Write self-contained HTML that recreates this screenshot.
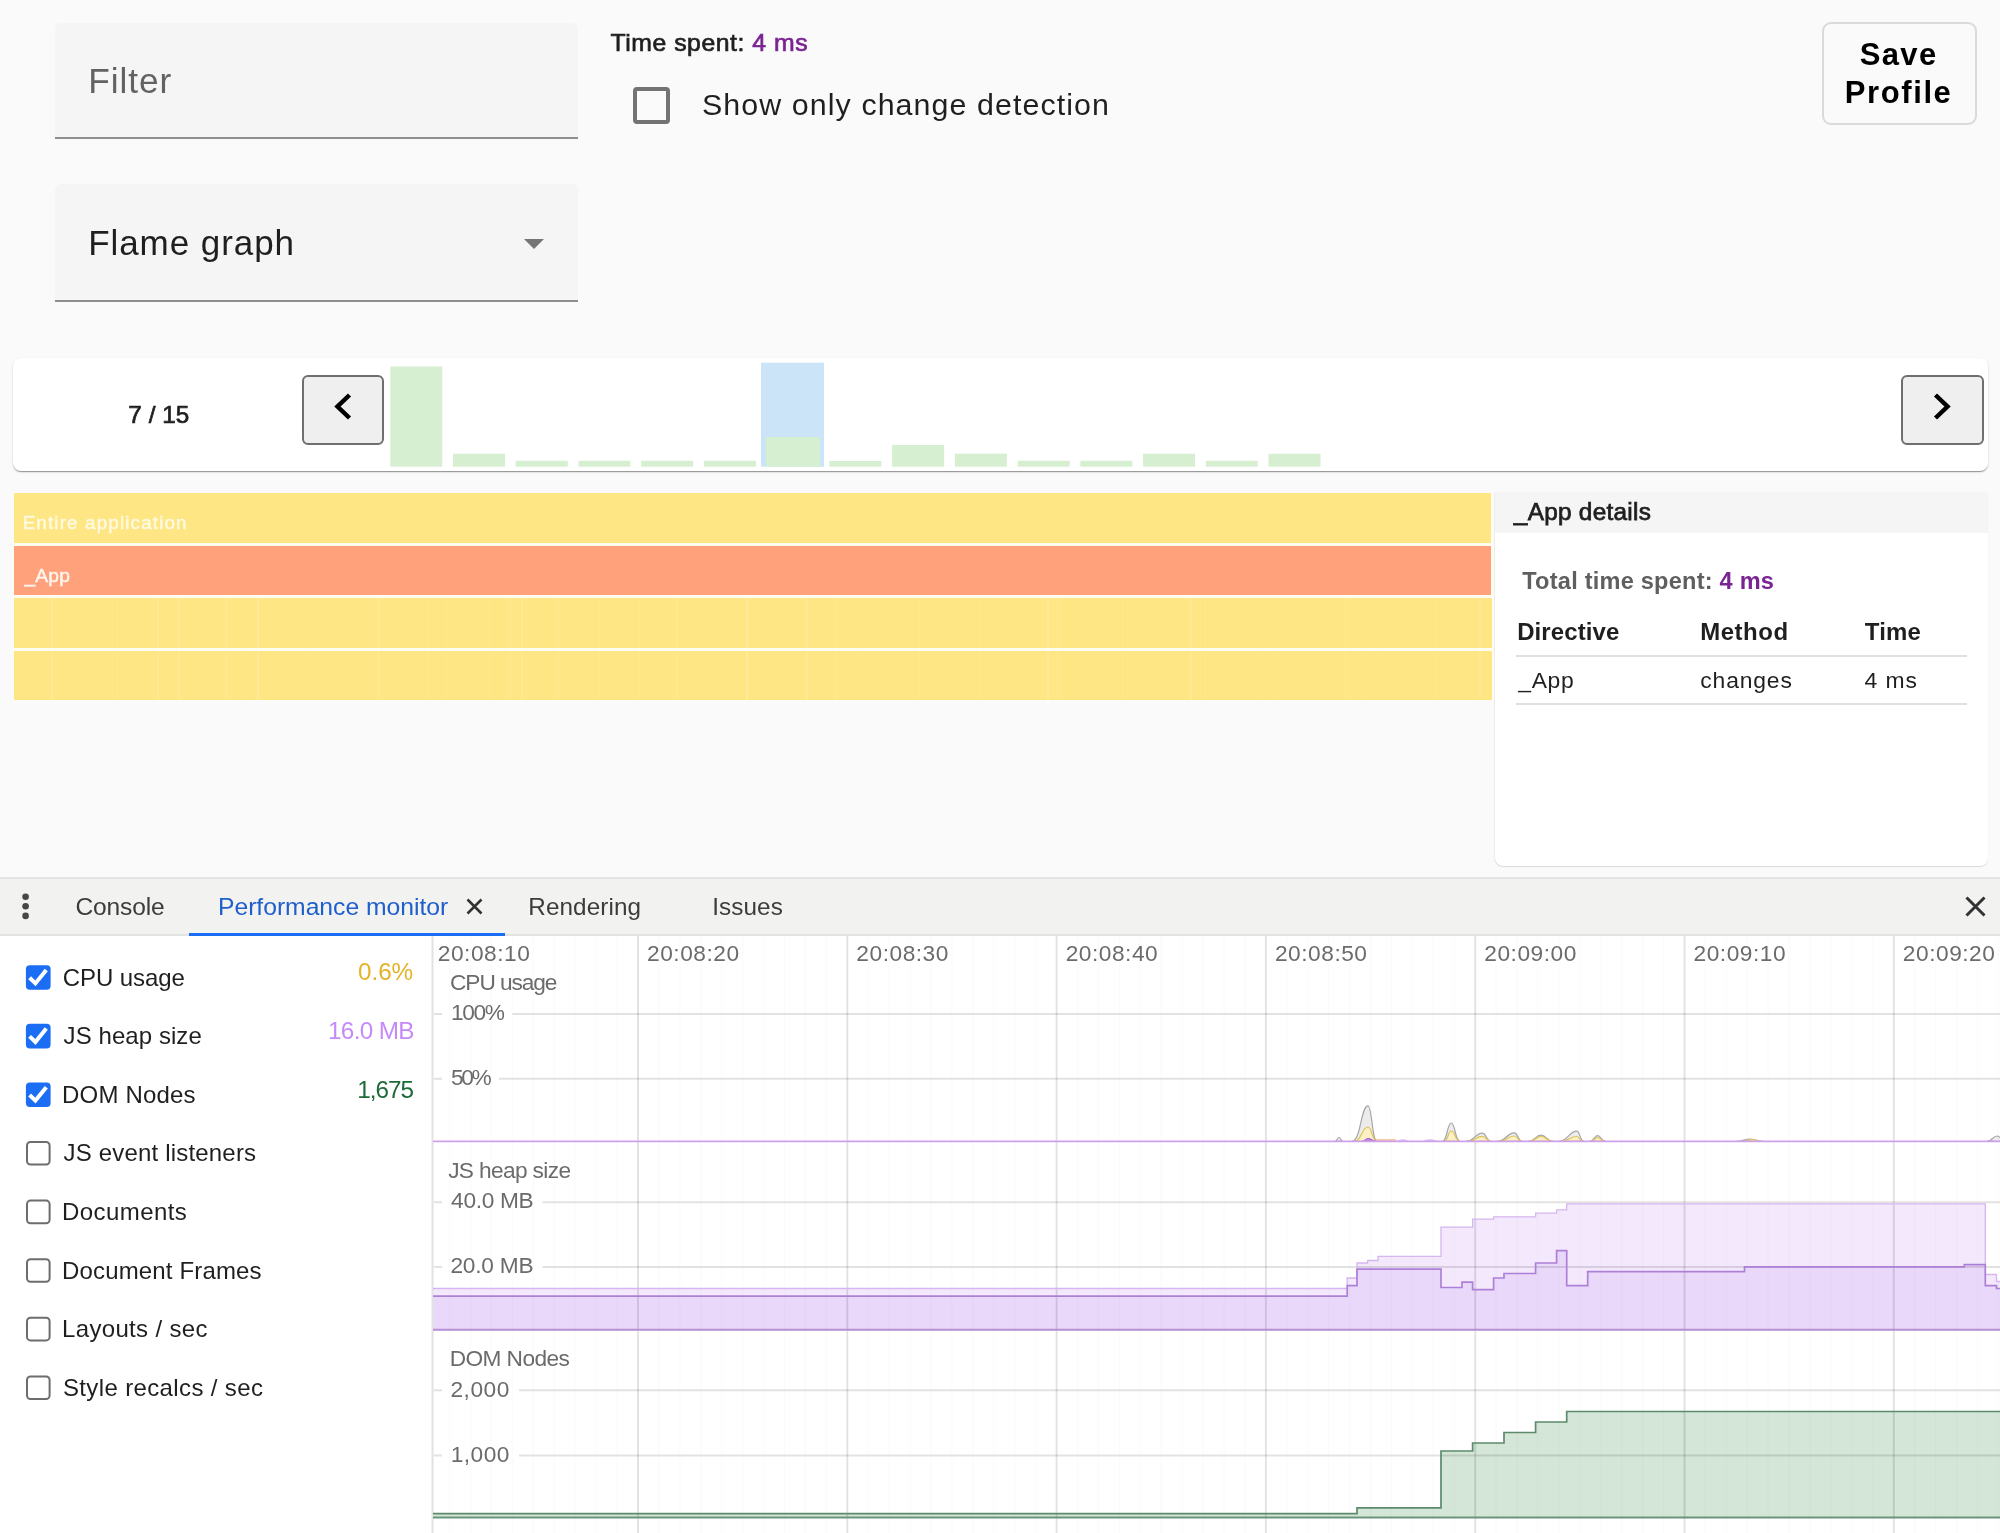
<!DOCTYPE html>
<html><head><meta charset="utf-8"><title>Profiler</title>
<style>
html,body{margin:0;padding:0;}
body{width:2000px;height:1533px;position:relative;overflow:hidden;background:#fafafa;font-family:"Liberation Sans", sans-serif;}
svg text{font-family:"Liberation Sans", sans-serif;}
</style></head><body>
<div style="position:absolute;left:55px;top:23px;width:523px;height:115px;background:#f5f5f5;border-radius:6px 6px 0 0;"></div><div style="position:absolute;left:55px;top:136.5px;width:523px;height:2px;background:#8e8e8e;"></div><div style="position:absolute;left:55px;top:184px;width:523px;height:116px;background:#f5f5f5;border-radius:6px 6px 0 0;"></div><div style="position:absolute;left:55px;top:299.5px;width:523px;height:2px;background:#8e8e8e;"></div><div style="position:absolute;left:632.5px;top:86.5px;width:29.5px;height:29.5px;border:4px solid #737373;border-radius:4px;"></div><div style="position:absolute;left:1822px;top:22px;width:151px;height:99px;border:2px solid #dadada;border-radius:9px;"></div><div style="position:absolute;left:12.5px;top:358px;width:1975.5px;height:113px;background:#fff;border-radius:8px;box-shadow:0 2px 1px -1px rgba(0,0,0,.24),0 1px 1px 0 rgba(0,0,0,.15),0 1px 3px 0 rgba(0,0,0,.12);"></div><div style="position:absolute;left:301.5px;top:375px;width:78.5px;height:65.5px;background:#efefef;border:2px solid #6f6f6f;border-radius:6px;"></div><div style="position:absolute;left:1900.5px;top:375px;width:79px;height:65.5px;background:#efefef;border:2px solid #6f6f6f;border-radius:6px;"></div><div style="position:absolute;left:13px;top:492.5px;width:1481px;height:208px;background:#fffdf2;"></div><div style="position:absolute;left:14px;top:493.4px;width:1477px;height:49.5px;background:#fee684;"></div><div style="position:absolute;left:14px;top:546px;width:1477px;height:49px;background:#ffa17b;"></div><div style="position:absolute;left:13.5px;top:598px;width:1478.5px;height:50px;background:#fee684;"></div><div style="position:absolute;left:13.5px;top:650.5px;width:1478.5px;height:49.5px;background:#fee684;"></div><div style="position:absolute;left:51.1px;top:598px;width:1.5px;height:49.5px;background:rgba(255,255,255,0.12);"></div><div style="position:absolute;left:116.6px;top:598px;width:1.5px;height:49.5px;background:rgba(255,255,255,0.11);"></div><div style="position:absolute;left:157.1px;top:598px;width:1.5px;height:49.5px;background:rgba(255,255,255,0.12);"></div><div style="position:absolute;left:178.1px;top:598px;width:1.5px;height:49.5px;background:rgba(255,255,255,0.11);"></div><div style="position:absolute;left:225.9px;top:598px;width:1.5px;height:49.5px;background:rgba(255,255,255,0.15);"></div><div style="position:absolute;left:241.6px;top:598px;width:1.5px;height:49.5px;background:rgba(255,255,255,0.09);"></div><div style="position:absolute;left:257.0px;top:598px;width:1.5px;height:49.5px;background:rgba(255,255,255,0.15);"></div><div style="position:absolute;left:308.6px;top:598px;width:1.5px;height:49.5px;background:rgba(255,255,255,0.06);"></div><div style="position:absolute;left:377.6px;top:598px;width:1.5px;height:49.5px;background:rgba(255,255,255,0.17);"></div><div style="position:absolute;left:426.8px;top:598px;width:1.5px;height:49.5px;background:rgba(255,255,255,0.12);"></div><div style="position:absolute;left:446.2px;top:598px;width:1.5px;height:49.5px;background:rgba(255,255,255,0.05);"></div><div style="position:absolute;left:488.0px;top:598px;width:1.5px;height:49.5px;background:rgba(255,255,255,0.06);"></div><div style="position:absolute;left:509.4px;top:598px;width:1.5px;height:49.5px;background:rgba(255,255,255,0.08);"></div><div style="position:absolute;left:521.2px;top:598px;width:1.5px;height:49.5px;background:rgba(255,255,255,0.11);"></div><div style="position:absolute;left:557.6px;top:598px;width:1.5px;height:49.5px;background:rgba(255,255,255,0.15);"></div><div style="position:absolute;left:598.7px;top:598px;width:1.5px;height:49.5px;background:rgba(255,255,255,0.13);"></div><div style="position:absolute;left:638.7px;top:598px;width:1.5px;height:49.5px;background:rgba(255,255,255,0.13);"></div><div style="position:absolute;left:676.2px;top:598px;width:1.5px;height:49.5px;background:rgba(255,255,255,0.08);"></div><div style="position:absolute;left:746.0px;top:598px;width:1.5px;height:49.5px;background:rgba(255,255,255,0.17);"></div><div style="position:absolute;left:806.4px;top:598px;width:1.5px;height:49.5px;background:rgba(255,255,255,0.13);"></div><div style="position:absolute;left:835.4px;top:598px;width:1.5px;height:49.5px;background:rgba(255,255,255,0.08);"></div><div style="position:absolute;left:862.7px;top:598px;width:1.5px;height:49.5px;background:rgba(255,255,255,0.06);"></div><div style="position:absolute;left:918.7px;top:598px;width:1.5px;height:49.5px;background:rgba(255,255,255,0.10);"></div><div style="position:absolute;left:979.5px;top:598px;width:1.5px;height:49.5px;background:rgba(255,255,255,0.10);"></div><div style="position:absolute;left:1047.0px;top:598px;width:1.5px;height:49.5px;background:rgba(255,255,255,0.15);"></div><div style="position:absolute;left:1057.0px;top:598px;width:1.5px;height:49.5px;background:rgba(255,255,255,0.08);"></div><div style="position:absolute;left:1121.6px;top:598px;width:1.5px;height:49.5px;background:rgba(255,255,255,0.11);"></div><div style="position:absolute;left:1190.4px;top:598px;width:1.5px;height:49.5px;background:rgba(255,255,255,0.10);"></div><div style="position:absolute;left:1204.8px;top:598px;width:1.5px;height:49.5px;background:rgba(255,255,255,0.13);"></div><div style="position:absolute;left:1261.5px;top:598px;width:1.5px;height:49.5px;background:rgba(255,255,255,0.08);"></div><div style="position:absolute;left:1276.8px;top:598px;width:1.5px;height:49.5px;background:rgba(255,255,255,0.09);"></div><div style="position:absolute;left:1344.6px;top:598px;width:1.5px;height:49.5px;background:rgba(255,255,255,0.14);"></div><div style="position:absolute;left:1361.7px;top:598px;width:1.5px;height:49.5px;background:rgba(255,255,255,0.08);"></div><div style="position:absolute;left:1377.7px;top:598px;width:1.5px;height:49.5px;background:rgba(255,255,255,0.06);"></div><div style="position:absolute;left:1435.6px;top:598px;width:1.5px;height:49.5px;background:rgba(255,255,255,0.07);"></div><div style="position:absolute;left:1479.1px;top:598px;width:1.5px;height:49.5px;background:rgba(255,255,255,0.10);"></div><div style="position:absolute;left:51.1px;top:650.5px;width:1.5px;height:49.5px;background:rgba(255,255,255,0.12);"></div><div style="position:absolute;left:116.6px;top:650.5px;width:1.5px;height:49.5px;background:rgba(255,255,255,0.11);"></div><div style="position:absolute;left:157.1px;top:650.5px;width:1.5px;height:49.5px;background:rgba(255,255,255,0.12);"></div><div style="position:absolute;left:178.1px;top:650.5px;width:1.5px;height:49.5px;background:rgba(255,255,255,0.11);"></div><div style="position:absolute;left:225.9px;top:650.5px;width:1.5px;height:49.5px;background:rgba(255,255,255,0.15);"></div><div style="position:absolute;left:241.6px;top:650.5px;width:1.5px;height:49.5px;background:rgba(255,255,255,0.09);"></div><div style="position:absolute;left:257.0px;top:650.5px;width:1.5px;height:49.5px;background:rgba(255,255,255,0.15);"></div><div style="position:absolute;left:308.6px;top:650.5px;width:1.5px;height:49.5px;background:rgba(255,255,255,0.06);"></div><div style="position:absolute;left:377.6px;top:650.5px;width:1.5px;height:49.5px;background:rgba(255,255,255,0.17);"></div><div style="position:absolute;left:426.8px;top:650.5px;width:1.5px;height:49.5px;background:rgba(255,255,255,0.12);"></div><div style="position:absolute;left:446.2px;top:650.5px;width:1.5px;height:49.5px;background:rgba(255,255,255,0.05);"></div><div style="position:absolute;left:488.0px;top:650.5px;width:1.5px;height:49.5px;background:rgba(255,255,255,0.06);"></div><div style="position:absolute;left:509.4px;top:650.5px;width:1.5px;height:49.5px;background:rgba(255,255,255,0.08);"></div><div style="position:absolute;left:521.2px;top:650.5px;width:1.5px;height:49.5px;background:rgba(255,255,255,0.11);"></div><div style="position:absolute;left:557.6px;top:650.5px;width:1.5px;height:49.5px;background:rgba(255,255,255,0.15);"></div><div style="position:absolute;left:598.7px;top:650.5px;width:1.5px;height:49.5px;background:rgba(255,255,255,0.13);"></div><div style="position:absolute;left:638.7px;top:650.5px;width:1.5px;height:49.5px;background:rgba(255,255,255,0.13);"></div><div style="position:absolute;left:676.2px;top:650.5px;width:1.5px;height:49.5px;background:rgba(255,255,255,0.08);"></div><div style="position:absolute;left:746.0px;top:650.5px;width:1.5px;height:49.5px;background:rgba(255,255,255,0.17);"></div><div style="position:absolute;left:806.4px;top:650.5px;width:1.5px;height:49.5px;background:rgba(255,255,255,0.13);"></div><div style="position:absolute;left:835.4px;top:650.5px;width:1.5px;height:49.5px;background:rgba(255,255,255,0.08);"></div><div style="position:absolute;left:862.7px;top:650.5px;width:1.5px;height:49.5px;background:rgba(255,255,255,0.06);"></div><div style="position:absolute;left:918.7px;top:650.5px;width:1.5px;height:49.5px;background:rgba(255,255,255,0.10);"></div><div style="position:absolute;left:979.5px;top:650.5px;width:1.5px;height:49.5px;background:rgba(255,255,255,0.10);"></div><div style="position:absolute;left:1047.0px;top:650.5px;width:1.5px;height:49.5px;background:rgba(255,255,255,0.15);"></div><div style="position:absolute;left:1057.0px;top:650.5px;width:1.5px;height:49.5px;background:rgba(255,255,255,0.08);"></div><div style="position:absolute;left:1121.6px;top:650.5px;width:1.5px;height:49.5px;background:rgba(255,255,255,0.11);"></div><div style="position:absolute;left:1190.4px;top:650.5px;width:1.5px;height:49.5px;background:rgba(255,255,255,0.10);"></div><div style="position:absolute;left:1204.8px;top:650.5px;width:1.5px;height:49.5px;background:rgba(255,255,255,0.13);"></div><div style="position:absolute;left:1261.5px;top:650.5px;width:1.5px;height:49.5px;background:rgba(255,255,255,0.08);"></div><div style="position:absolute;left:1276.8px;top:650.5px;width:1.5px;height:49.5px;background:rgba(255,255,255,0.09);"></div><div style="position:absolute;left:1344.6px;top:650.5px;width:1.5px;height:49.5px;background:rgba(255,255,255,0.14);"></div><div style="position:absolute;left:1361.7px;top:650.5px;width:1.5px;height:49.5px;background:rgba(255,255,255,0.08);"></div><div style="position:absolute;left:1377.7px;top:650.5px;width:1.5px;height:49.5px;background:rgba(255,255,255,0.06);"></div><div style="position:absolute;left:1435.6px;top:650.5px;width:1.5px;height:49.5px;background:rgba(255,255,255,0.07);"></div><div style="position:absolute;left:1479.1px;top:650.5px;width:1.5px;height:49.5px;background:rgba(255,255,255,0.10);"></div><div style="position:absolute;left:1495px;top:492px;width:492.5px;height:374px;background:#fff;border-radius:0 0 8px 8px;box-shadow:-1px 0 1px rgba(0,0,0,.05),0 1px 1px rgba(0,0,0,.12);"></div><div style="position:absolute;left:1495px;top:492px;width:492.5px;height:41px;background:#f5f5f5;"></div><div style="position:absolute;left:1516px;top:654.5px;width:451px;height:2px;background:#e0e0e0;"></div><div style="position:absolute;left:1516px;top:702.5px;width:451px;height:2px;background:#e0e0e0;"></div><div style="position:absolute;left:0;top:877px;width:2000px;height:656px;background:#fff;"></div><div style="position:absolute;left:0;top:877px;width:2000px;height:2px;background:#e3e3e3;"></div><div style="position:absolute;left:0;top:879px;width:2000px;height:55px;background:#f2f2f1;"></div><div style="position:absolute;left:0;top:934px;width:2000px;height:2px;background:#e3e3e3;"></div><div style="position:absolute;left:188.8px;top:932.5px;width:316px;height:3px;background:#1b6ef3;"></div>
<svg style="position:absolute;left:0;top:0;will-change:transform" width="2000" height="1533" viewBox="0 0 2000 1533">
<polygon points="433.0,1288.5 1347.2,1288.5 1347.2,1278.0 1357.0,1278.0 1357.0,1263.0 1367.6,1263.0 1367.6,1260.5 1378.0,1260.5 1378.0,1256.3 1441.0,1256.3 1441.0,1227.2 1472.6,1227.2 1472.6,1219.2 1493.6,1219.2 1493.6,1216.8 1535.6,1216.8 1535.6,1213.2 1556.6,1213.2 1556.6,1209.8 1566.7,1209.8 1566.7,1203.8 1985.3,1203.8 1985.3,1274.5 1996.5,1274.5 1996.5,1281.5 2001.0,1281.5 2001,1330 433,1330" fill="#f4e8fd"/>
<polygon points="433.0,1296.2 1347.2,1296.2 1347.2,1285.7 1357.0,1285.7 1357.0,1269.2 1441.0,1269.2 1441.0,1287.5 1462.0,1287.5 1462.0,1282.2 1472.6,1282.2 1472.6,1289.6 1493.6,1289.6 1493.6,1278.0 1504.0,1278.0 1504.0,1273.5 1535.6,1273.5 1535.6,1263.0 1556.6,1263.0 1556.6,1250.7 1566.7,1250.7 1566.7,1285.7 1587.7,1285.7 1587.7,1271.7 1744.5,1271.7 1744.5,1266.8 1964.3,1266.8 1964.3,1264.7 1985.3,1264.7 1985.3,1285.7 1996.5,1285.7 1996.5,1288.5 2001.0,1288.5 2001,1330 433,1330" fill="#ead8fb"/>
<polygon points="433.0,1513.7 1357.0,1513.7 1357.0,1507.8 1441.0,1507.8 1441.0,1451.0 1472.6,1451.0 1472.6,1443.0 1504.0,1443.0 1504.0,1432.5 1535.6,1432.5 1535.6,1422.0 1566.7,1422.0 1566.7,1411.5 2001.0,1411.5 2001,1517.6 433,1517.6" fill="#d3e6d7"/>
<line x1="449.63" y1="936" x2="449.63" y2="1533" stroke="rgba(0,0,0,0.016)" stroke-width="1.5"/>
<line x1="470.56" y1="936" x2="470.56" y2="1533" stroke="rgba(0,0,0,0.016)" stroke-width="1.5"/>
<line x1="491.49" y1="936" x2="491.49" y2="1533" stroke="rgba(0,0,0,0.016)" stroke-width="1.5"/>
<line x1="512.42" y1="936" x2="512.42" y2="1533" stroke="rgba(0,0,0,0.016)" stroke-width="1.5"/>
<line x1="533.35" y1="936" x2="533.35" y2="1533" stroke="rgba(0,0,0,0.016)" stroke-width="1.5"/>
<line x1="554.28" y1="936" x2="554.28" y2="1533" stroke="rgba(0,0,0,0.016)" stroke-width="1.5"/>
<line x1="575.21" y1="936" x2="575.21" y2="1533" stroke="rgba(0,0,0,0.016)" stroke-width="1.5"/>
<line x1="596.14" y1="936" x2="596.14" y2="1533" stroke="rgba(0,0,0,0.016)" stroke-width="1.5"/>
<line x1="617.07" y1="936" x2="617.07" y2="1533" stroke="rgba(0,0,0,0.016)" stroke-width="1.5"/>
<line x1="638.00" y1="936" x2="638.00" y2="1533" stroke="rgba(0,0,0,0.016)" stroke-width="1.5"/>
<line x1="658.93" y1="936" x2="658.93" y2="1533" stroke="rgba(0,0,0,0.016)" stroke-width="1.5"/>
<line x1="679.86" y1="936" x2="679.86" y2="1533" stroke="rgba(0,0,0,0.016)" stroke-width="1.5"/>
<line x1="700.79" y1="936" x2="700.79" y2="1533" stroke="rgba(0,0,0,0.016)" stroke-width="1.5"/>
<line x1="721.72" y1="936" x2="721.72" y2="1533" stroke="rgba(0,0,0,0.016)" stroke-width="1.5"/>
<line x1="742.65" y1="936" x2="742.65" y2="1533" stroke="rgba(0,0,0,0.016)" stroke-width="1.5"/>
<line x1="763.58" y1="936" x2="763.58" y2="1533" stroke="rgba(0,0,0,0.016)" stroke-width="1.5"/>
<line x1="784.51" y1="936" x2="784.51" y2="1533" stroke="rgba(0,0,0,0.016)" stroke-width="1.5"/>
<line x1="805.44" y1="936" x2="805.44" y2="1533" stroke="rgba(0,0,0,0.016)" stroke-width="1.5"/>
<line x1="826.37" y1="936" x2="826.37" y2="1533" stroke="rgba(0,0,0,0.016)" stroke-width="1.5"/>
<line x1="847.30" y1="936" x2="847.30" y2="1533" stroke="rgba(0,0,0,0.016)" stroke-width="1.5"/>
<line x1="868.23" y1="936" x2="868.23" y2="1533" stroke="rgba(0,0,0,0.016)" stroke-width="1.5"/>
<line x1="889.16" y1="936" x2="889.16" y2="1533" stroke="rgba(0,0,0,0.016)" stroke-width="1.5"/>
<line x1="910.09" y1="936" x2="910.09" y2="1533" stroke="rgba(0,0,0,0.016)" stroke-width="1.5"/>
<line x1="931.02" y1="936" x2="931.02" y2="1533" stroke="rgba(0,0,0,0.016)" stroke-width="1.5"/>
<line x1="951.95" y1="936" x2="951.95" y2="1533" stroke="rgba(0,0,0,0.016)" stroke-width="1.5"/>
<line x1="972.88" y1="936" x2="972.88" y2="1533" stroke="rgba(0,0,0,0.016)" stroke-width="1.5"/>
<line x1="993.81" y1="936" x2="993.81" y2="1533" stroke="rgba(0,0,0,0.016)" stroke-width="1.5"/>
<line x1="1014.74" y1="936" x2="1014.74" y2="1533" stroke="rgba(0,0,0,0.016)" stroke-width="1.5"/>
<line x1="1035.67" y1="936" x2="1035.67" y2="1533" stroke="rgba(0,0,0,0.016)" stroke-width="1.5"/>
<line x1="1056.60" y1="936" x2="1056.60" y2="1533" stroke="rgba(0,0,0,0.016)" stroke-width="1.5"/>
<line x1="1077.53" y1="936" x2="1077.53" y2="1533" stroke="rgba(0,0,0,0.016)" stroke-width="1.5"/>
<line x1="1098.46" y1="936" x2="1098.46" y2="1533" stroke="rgba(0,0,0,0.016)" stroke-width="1.5"/>
<line x1="1119.39" y1="936" x2="1119.39" y2="1533" stroke="rgba(0,0,0,0.016)" stroke-width="1.5"/>
<line x1="1140.32" y1="936" x2="1140.32" y2="1533" stroke="rgba(0,0,0,0.016)" stroke-width="1.5"/>
<line x1="1161.25" y1="936" x2="1161.25" y2="1533" stroke="rgba(0,0,0,0.016)" stroke-width="1.5"/>
<line x1="1182.18" y1="936" x2="1182.18" y2="1533" stroke="rgba(0,0,0,0.016)" stroke-width="1.5"/>
<line x1="1203.11" y1="936" x2="1203.11" y2="1533" stroke="rgba(0,0,0,0.016)" stroke-width="1.5"/>
<line x1="1224.04" y1="936" x2="1224.04" y2="1533" stroke="rgba(0,0,0,0.016)" stroke-width="1.5"/>
<line x1="1244.97" y1="936" x2="1244.97" y2="1533" stroke="rgba(0,0,0,0.016)" stroke-width="1.5"/>
<line x1="1265.90" y1="936" x2="1265.90" y2="1533" stroke="rgba(0,0,0,0.016)" stroke-width="1.5"/>
<line x1="1286.83" y1="936" x2="1286.83" y2="1533" stroke="rgba(0,0,0,0.016)" stroke-width="1.5"/>
<line x1="1307.76" y1="936" x2="1307.76" y2="1533" stroke="rgba(0,0,0,0.016)" stroke-width="1.5"/>
<line x1="1328.69" y1="936" x2="1328.69" y2="1533" stroke="rgba(0,0,0,0.016)" stroke-width="1.5"/>
<line x1="1349.62" y1="936" x2="1349.62" y2="1533" stroke="rgba(0,0,0,0.016)" stroke-width="1.5"/>
<line x1="1370.55" y1="936" x2="1370.55" y2="1533" stroke="rgba(0,0,0,0.016)" stroke-width="1.5"/>
<line x1="1391.48" y1="936" x2="1391.48" y2="1533" stroke="rgba(0,0,0,0.016)" stroke-width="1.5"/>
<line x1="1412.41" y1="936" x2="1412.41" y2="1533" stroke="rgba(0,0,0,0.016)" stroke-width="1.5"/>
<line x1="1433.34" y1="936" x2="1433.34" y2="1533" stroke="rgba(0,0,0,0.016)" stroke-width="1.5"/>
<line x1="1454.27" y1="936" x2="1454.27" y2="1533" stroke="rgba(0,0,0,0.016)" stroke-width="1.5"/>
<line x1="1475.20" y1="936" x2="1475.20" y2="1533" stroke="rgba(0,0,0,0.016)" stroke-width="1.5"/>
<line x1="1496.13" y1="936" x2="1496.13" y2="1533" stroke="rgba(0,0,0,0.016)" stroke-width="1.5"/>
<line x1="1517.06" y1="936" x2="1517.06" y2="1533" stroke="rgba(0,0,0,0.016)" stroke-width="1.5"/>
<line x1="1537.99" y1="936" x2="1537.99" y2="1533" stroke="rgba(0,0,0,0.016)" stroke-width="1.5"/>
<line x1="1558.92" y1="936" x2="1558.92" y2="1533" stroke="rgba(0,0,0,0.016)" stroke-width="1.5"/>
<line x1="1579.85" y1="936" x2="1579.85" y2="1533" stroke="rgba(0,0,0,0.016)" stroke-width="1.5"/>
<line x1="1600.78" y1="936" x2="1600.78" y2="1533" stroke="rgba(0,0,0,0.016)" stroke-width="1.5"/>
<line x1="1621.71" y1="936" x2="1621.71" y2="1533" stroke="rgba(0,0,0,0.016)" stroke-width="1.5"/>
<line x1="1642.64" y1="936" x2="1642.64" y2="1533" stroke="rgba(0,0,0,0.016)" stroke-width="1.5"/>
<line x1="1663.57" y1="936" x2="1663.57" y2="1533" stroke="rgba(0,0,0,0.016)" stroke-width="1.5"/>
<line x1="1684.50" y1="936" x2="1684.50" y2="1533" stroke="rgba(0,0,0,0.016)" stroke-width="1.5"/>
<line x1="1705.43" y1="936" x2="1705.43" y2="1533" stroke="rgba(0,0,0,0.016)" stroke-width="1.5"/>
<line x1="1726.36" y1="936" x2="1726.36" y2="1533" stroke="rgba(0,0,0,0.016)" stroke-width="1.5"/>
<line x1="1747.29" y1="936" x2="1747.29" y2="1533" stroke="rgba(0,0,0,0.016)" stroke-width="1.5"/>
<line x1="1768.22" y1="936" x2="1768.22" y2="1533" stroke="rgba(0,0,0,0.016)" stroke-width="1.5"/>
<line x1="1789.15" y1="936" x2="1789.15" y2="1533" stroke="rgba(0,0,0,0.016)" stroke-width="1.5"/>
<line x1="1810.08" y1="936" x2="1810.08" y2="1533" stroke="rgba(0,0,0,0.016)" stroke-width="1.5"/>
<line x1="1831.01" y1="936" x2="1831.01" y2="1533" stroke="rgba(0,0,0,0.016)" stroke-width="1.5"/>
<line x1="1851.94" y1="936" x2="1851.94" y2="1533" stroke="rgba(0,0,0,0.016)" stroke-width="1.5"/>
<line x1="1872.87" y1="936" x2="1872.87" y2="1533" stroke="rgba(0,0,0,0.016)" stroke-width="1.5"/>
<line x1="1893.80" y1="936" x2="1893.80" y2="1533" stroke="rgba(0,0,0,0.016)" stroke-width="1.5"/>
<line x1="1914.73" y1="936" x2="1914.73" y2="1533" stroke="rgba(0,0,0,0.016)" stroke-width="1.5"/>
<line x1="1935.66" y1="936" x2="1935.66" y2="1533" stroke="rgba(0,0,0,0.016)" stroke-width="1.5"/>
<line x1="1956.59" y1="936" x2="1956.59" y2="1533" stroke="rgba(0,0,0,0.016)" stroke-width="1.5"/>
<line x1="1977.52" y1="936" x2="1977.52" y2="1533" stroke="rgba(0,0,0,0.016)" stroke-width="1.5"/>
<line x1="1998.45" y1="936" x2="1998.45" y2="1533" stroke="rgba(0,0,0,0.016)" stroke-width="1.5"/>
<line x1="432.5" y1="936" x2="432.5" y2="1533" stroke="#e2e2e2" stroke-width="2"/>
<line x1="638.0" y1="936" x2="638.0" y2="1533" stroke="rgba(0,0,0,0.1)" stroke-width="2"/>
<line x1="847.3" y1="936" x2="847.3" y2="1533" stroke="rgba(0,0,0,0.1)" stroke-width="2"/>
<line x1="1056.6" y1="936" x2="1056.6" y2="1533" stroke="rgba(0,0,0,0.1)" stroke-width="2"/>
<line x1="1265.9" y1="936" x2="1265.9" y2="1533" stroke="rgba(0,0,0,0.1)" stroke-width="2"/>
<line x1="1475.2" y1="936" x2="1475.2" y2="1533" stroke="rgba(0,0,0,0.1)" stroke-width="2"/>
<line x1="1684.5" y1="936" x2="1684.5" y2="1533" stroke="rgba(0,0,0,0.1)" stroke-width="2"/>
<line x1="1893.8" y1="936" x2="1893.8" y2="1533" stroke="rgba(0,0,0,0.1)" stroke-width="2"/>
<line x1="434" y1="1014" x2="442" y2="1014" stroke="rgba(0,0,0,0.115)" stroke-width="2"/>
<line x1="512.4" y1="1014" x2="2000" y2="1014" stroke="rgba(0,0,0,0.115)" stroke-width="2"/>
<line x1="434" y1="1078.8" x2="442" y2="1078.8" stroke="rgba(0,0,0,0.115)" stroke-width="2"/>
<line x1="499" y1="1078.8" x2="2000" y2="1078.8" stroke="rgba(0,0,0,0.115)" stroke-width="2"/>
<line x1="434" y1="1202.2" x2="442" y2="1202.2" stroke="rgba(0,0,0,0.115)" stroke-width="2"/>
<line x1="542.4" y1="1202.2" x2="2000" y2="1202.2" stroke="rgba(0,0,0,0.115)" stroke-width="2"/>
<line x1="434" y1="1266.9" x2="442" y2="1266.9" stroke="rgba(0,0,0,0.115)" stroke-width="2"/>
<line x1="542.4" y1="1266.9" x2="2000" y2="1266.9" stroke="rgba(0,0,0,0.115)" stroke-width="2"/>
<line x1="434" y1="1390.3" x2="442" y2="1390.3" stroke="rgba(0,0,0,0.115)" stroke-width="2"/>
<line x1="519" y1="1390.3" x2="2000" y2="1390.3" stroke="rgba(0,0,0,0.115)" stroke-width="2"/>
<line x1="434" y1="1455.5" x2="442" y2="1455.5" stroke="rgba(0,0,0,0.115)" stroke-width="2"/>
<line x1="519" y1="1455.5" x2="2000" y2="1455.5" stroke="rgba(0,0,0,0.115)" stroke-width="2"/>
<polyline points="433.0,1288.5 1347.2,1288.5 1347.2,1278.0 1357.0,1278.0 1357.0,1263.0 1367.6,1263.0 1367.6,1260.5 1378.0,1260.5 1378.0,1256.3 1441.0,1256.3 1441.0,1227.2 1472.6,1227.2 1472.6,1219.2 1493.6,1219.2 1493.6,1216.8 1535.6,1216.8 1535.6,1213.2 1556.6,1213.2 1556.6,1209.8 1566.7,1209.8 1566.7,1203.8 1985.3,1203.8 1985.3,1274.5 1996.5,1274.5 1996.5,1281.5 2001.0,1281.5" fill="none" stroke="#d7b5ef" stroke-width="1.3"/>
<polyline points="433.0,1296.2 1347.2,1296.2 1347.2,1285.7 1357.0,1285.7 1357.0,1269.2 1441.0,1269.2 1441.0,1287.5 1462.0,1287.5 1462.0,1282.2 1472.6,1282.2 1472.6,1289.6 1493.6,1289.6 1493.6,1278.0 1504.0,1278.0 1504.0,1273.5 1535.6,1273.5 1535.6,1263.0 1556.6,1263.0 1556.6,1250.7 1566.7,1250.7 1566.7,1285.7 1587.7,1285.7 1587.7,1271.7 1744.5,1271.7 1744.5,1266.8 1964.3,1266.8 1964.3,1264.7 1985.3,1264.7 1985.3,1285.7 1996.5,1285.7 1996.5,1288.5 2001.0,1288.5" fill="none" stroke="#ad80d8" stroke-width="1.7"/>
<line x1="433" y1="1329.8" x2="2000" y2="1329.8" stroke="#b48fd4" stroke-width="2"/>
<polyline points="433.0,1513.7 1357.0,1513.7 1357.0,1507.8 1441.0,1507.8 1441.0,1451.0 1472.6,1451.0 1472.6,1443.0 1504.0,1443.0 1504.0,1432.5 1535.6,1432.5 1535.6,1422.0 1566.7,1422.0 1566.7,1411.5 2001.0,1411.5" fill="none" stroke="#5d8a6c" stroke-width="1.7"/>
<line x1="433" y1="1517.6" x2="2000" y2="1517.6" stroke="#6b957a" stroke-width="2"/>
<path d="M1335,1141.4 C1337.2,1141.4 1337.2,1137.5 1339,1137.5 C1340.8,1137.5 1340.8,1141.4 1343,1141.4 Z" fill="#ececec" stroke="#a6a6a6" stroke-width="1.2"/>
<path d="M1352,1141.4 C1360.8,1141.4 1360.8,1105.8 1368,1105.8 C1372.05,1105.8 1372.05,1141.4 1377,1141.4 Z" fill="#ececec" stroke="#a6a6a6" stroke-width="1.2"/>
<path d="M1442.4,1141.4 C1447.24,1141.4 1447.24,1123 1451.2,1123 C1455.16,1123 1455.16,1141.4 1460,1141.4 Z" fill="#ececec" stroke="#a6a6a6" stroke-width="1.2"/>
<path d="M1465.6,1141.4 C1474.84,1141.4 1474.84,1133.2 1482.4,1133.2 C1486.3600000000001,1133.2 1486.3600000000001,1141.4 1491.2,1141.4 Z" fill="#ececec" stroke="#a6a6a6" stroke-width="1.2"/>
<path d="M1496.8,1141.4 C1506.48,1141.4 1506.48,1132.8 1514.4,1132.8 C1518.0,1132.8 1518.0,1141.4 1522.4,1141.4 Z" fill="#ececec" stroke="#a6a6a6" stroke-width="1.2"/>
<path d="M1528,1141.4 C1535.15,1141.4 1535.15,1135.2 1541,1135.2 C1546.67,1135.2 1546.6699999999998,1141.4 1553.6,1141.4 Z" fill="#ececec" stroke="#a6a6a6" stroke-width="1.2"/>
<path d="M1558.4,1141.4 C1568.52,1141.4 1568.52,1131.2 1576.8,1131.2 C1580.04,1131.2 1580.04,1141.4 1584,1141.4 Z" fill="#ececec" stroke="#a6a6a6" stroke-width="1.2"/>
<path d="M1589.6,1141.4 C1594.0,1141.4 1594.0,1135.6 1597.6,1135.6 C1601.1999999999998,1135.6 1601.1999999999998,1141.4 1605.6,1141.4 Z" fill="#ececec" stroke="#a6a6a6" stroke-width="1.2"/>
<path d="M1736,1141.4 C1743.7,1141.4 1743.7,1139 1750,1139 C1755.85,1139 1755.85,1141.4 1763,1141.4 Z" fill="#ececec" stroke="#a6a6a6" stroke-width="1.2"/>
<path d="M1987,1141.4 C1992.5,1141.4 1992.5,1136 1997,1136 C2001.05,1136 2001.05,1141.4 2006,1141.4 Z" fill="#ececec" stroke="#a6a6a6" stroke-width="1.2"/>
<path d="M1354,1141.4 C1361.7,1141.4 1361.7,1127 1368,1127 C1372.05,1127 1372.05,1141.4 1377,1141.4 Z" fill="#fbf0c6" stroke="#dcc256" stroke-width="1.2"/>
<path d="M1444,1141.4 C1447.96,1141.4 1447.96,1131 1451.2,1131 C1455.16,1131 1455.16,1141.4 1460,1141.4 Z" fill="#fbf0c6" stroke="#dcc256" stroke-width="1.2"/>
<path d="M1467,1141.4 C1475.47,1141.4 1475.47,1136.4 1482.4,1136.4 C1486.27,1136.4 1486.27,1141.4 1491,1141.4 Z" fill="#fbf0c6" stroke="#dcc256" stroke-width="1.2"/>
<path d="M1498,1141.4 C1507.02,1141.4 1507.02,1136 1514.4,1136 C1517.8200000000002,1136 1517.8200000000002,1141.4 1522,1141.4 Z" fill="#fbf0c6" stroke="#dcc256" stroke-width="1.2"/>
<path d="M1529,1141.4 C1535.6,1141.4 1535.6,1136.5 1541,1136.5 C1546.4,1136.5 1546.4,1141.4 1553,1141.4 Z" fill="#fbf0c6" stroke="#dcc256" stroke-width="1.2"/>
<path d="M1560,1141.4 C1569.24,1141.4 1569.24,1136.5 1576.8,1136.5 C1579.59,1136.5 1579.59,1141.4 1583,1141.4 Z" fill="#fbf0c6" stroke="#dcc256" stroke-width="1.2"/>
<path d="M1591,1141.4 C1594.6299999999999,1141.4 1594.6299999999999,1137.5 1597.6,1137.5 C1600.9299999999998,1137.5 1600.9299999999998,1141.4 1605,1141.4 Z" fill="#fbf0c6" stroke="#dcc256" stroke-width="1.2"/>
<path d="M1744,1141.4 C1748.4,1141.4 1748.4,1139.5 1752,1139.5 C1756.5,1139.5 1756.5,1141.4 1762,1141.4 Z" fill="#fbf0c6" stroke="#dcc256" stroke-width="1.2"/>
<path d="M1362,1141.4 C1365.3,1141.4 1365.3,1138.5 1368,1138.5 C1371.6,1138.5 1371.6,1141.4 1376,1141.4 Z" fill="#c488e8" stroke="#a35cd0" stroke-width="1.2"/>
<rect x="1376" y="1139" width="20" height="2.4" fill="#f3c9a6"/>
<path d="M1394,1141.4 C1398.95,1141.4 1398.95,1139.3 1403,1139.3 C1407.05,1139.3 1407.05,1141.4 1412,1141.4 Z" fill="#dcc3f0"/>
<path d="M1418,1141.4 C1424.6,1141.4 1424.6,1139.3 1430,1139.3 C1435.4,1139.3 1435.4,1141.4 1442,1141.4 Z" fill="#dcc3f0"/>
<line x1="433" y1="1141.4" x2="2000" y2="1141.4" stroke="#cf9fee" stroke-width="1.6"/>
<text x="437.76" y="960.8" font-size="22.7" fill="#6b6b6b" textLength="92.03" lengthAdjust="spacing">20:08:10</text>
<text x="647.06" y="960.8" font-size="22.7" fill="#6b6b6b" textLength="92.03" lengthAdjust="spacing">20:08:20</text>
<text x="856.36" y="960.8" font-size="22.7" fill="#6b6b6b" textLength="92.03" lengthAdjust="spacing">20:08:30</text>
<text x="1065.66" y="960.8" font-size="22.7" fill="#6b6b6b" textLength="92.03" lengthAdjust="spacing">20:08:40</text>
<text x="1274.96" y="960.8" font-size="22.7" fill="#6b6b6b" textLength="92.03" lengthAdjust="spacing">20:08:50</text>
<text x="1484.26" y="960.8" font-size="22.7" fill="#6b6b6b" textLength="92.03" lengthAdjust="spacing">20:09:00</text>
<text x="1693.56" y="960.8" font-size="22.7" fill="#6b6b6b" textLength="92.03" lengthAdjust="spacing">20:09:10</text>
<text x="1902.86" y="960.8" font-size="22.7" fill="#6b6b6b" textLength="92.03" lengthAdjust="spacing">20:09:20</text>
<text x="450.05" y="989.6" font-size="22.7" fill="#6b6b6b" textLength="107.36" lengthAdjust="spacing">CPU usage</text>
<text x="451.07" y="1020.2" font-size="22.7" fill="#6b6b6b" textLength="53.94" lengthAdjust="spacing">100%</text>
<text x="451.09" y="1085.0" font-size="22.7" fill="#6b6b6b" textLength="40.52" lengthAdjust="spacing">50%</text>
<text x="448.15" y="1178" font-size="22.7" fill="#6b6b6b" textLength="122.86" lengthAdjust="spacing">JS heap size</text>
<text x="451.08" y="1208.2" font-size="22.7" fill="#6b6b6b" textLength="82.62" lengthAdjust="spacing">40.0 MB</text>
<text x="450.46" y="1273.4" font-size="22.7" fill="#6b6b6b" textLength="83.24" lengthAdjust="spacing">20.0 MB</text>
<text x="449.74" y="1366.3" font-size="22.7" fill="#6b6b6b" textLength="120.08" lengthAdjust="spacing">DOM Nodes</text>
<text x="450.46" y="1396.5" font-size="22.7" fill="#6b6b6b" textLength="58.93" lengthAdjust="spacing">2,000</text>
<text x="450.77" y="1462" font-size="22.7" fill="#6b6b6b" textLength="58.62" lengthAdjust="spacing">1,000</text>
<rect x="390.30" y="366.5" width="52" height="100.20" fill="#d6efd0"/><rect x="453.03" y="453.75" width="52" height="12.95" fill="#d6efd0"/><rect x="515.76" y="460.8" width="52" height="5.90" fill="#d6efd0"/><rect x="578.49" y="460.8" width="52" height="5.90" fill="#d6efd0"/><rect x="641.22" y="460.8" width="52" height="5.90" fill="#d6efd0"/><rect x="703.95" y="460.8" width="52" height="5.90" fill="#d6efd0"/><rect x="761" y="362.7" width="63" height="104.00" fill="#cce4f8"/><rect x="765.9" y="437" width="54" height="29.70" fill="#d6efd0"/><rect x="829.41" y="461" width="52" height="5.70" fill="#d6efd0"/><rect x="892.14" y="445" width="52" height="21.70" fill="#d6efd0"/><rect x="954.87" y="453.7" width="52" height="13.00" fill="#d6efd0"/><rect x="1017.60" y="460.8" width="52" height="5.90" fill="#d6efd0"/><rect x="1080.33" y="460.8" width="52" height="5.90" fill="#d6efd0"/><rect x="1143.06" y="453.75" width="52" height="12.95" fill="#d6efd0"/><rect x="1205.79" y="460.8" width="52" height="5.90" fill="#d6efd0"/><rect x="1268.52" y="453.75" width="52" height="12.95" fill="#d6efd0"/>
<text x="88.36" y="92.5" font-size="35.25" font-weight="400" fill="#626262" textLength="82.98" lengthAdjust="spacing" >Filter</text>
<text x="88.13" y="254.5" font-size="35.03" font-weight="400" fill="#1f1f1f" textLength="205.95" lengthAdjust="spacing" >Flame graph</text>
<path d="M524 239 L544 239 L534 249 Z" fill="#757575"/>
<text x="610.44" y="50.8" font-size="24.78" font-weight="400" fill="#1f1f1f" textLength="197.25" lengthAdjust="spacing" stroke="#1f1f1f" stroke-width="0.7">Time spent: <tspan fill="#7a2393" stroke="#7a2393">4 ms</tspan></text>
<text x="702.02" y="115.2" font-size="30.38" font-weight="400" fill="#1f1f1f" textLength="406.95" lengthAdjust="spacing" >Show only change detection</text>
<text x="1859.81" y="65.0" font-size="31.00" font-weight="700" fill="#000" textLength="76.35" lengthAdjust="spacing" >Save</text>
<text x="1844.83" y="102.8" font-size="31.00" font-weight="700" fill="#000" textLength="106.03" lengthAdjust="spacing" >Profile</text>
<text x="128.36" y="423" font-size="24.27" font-weight="400" fill="#1f1f1f" textLength="60.96" lengthAdjust="spacing" stroke="#1f1f1f" stroke-width="0.7">7 / 15</text>
<path d="M349.5 395 L337.5 406.5 L349.5 418" fill="none" stroke="#000" stroke-width="4.5" stroke-linecap="butt" stroke-linejoin="miter"/>
<path d="M1935.5 395 L1947.5 406.5 L1935.5 418" fill="none" stroke="#000" stroke-width="4.5" stroke-linecap="butt" stroke-linejoin="miter"/>
<text x="22.66" y="529" font-size="18.75" font-weight="400" fill="#fff9e0" textLength="163.86" lengthAdjust="spacing" stroke="#fff9e0" stroke-width="0.5">Entire application</text>
<text x="24.49" y="581.9" font-size="19.19" font-weight="400" fill="#fff5ee" textLength="45.32" lengthAdjust="spacing" stroke="#fff5ee" stroke-width="0.5">_App</text>
<text x="1513.87" y="520.25" font-size="24.35" font-weight="400" fill="#1f1f1f" textLength="137.01" lengthAdjust="spacing" stroke="#1f1f1f" stroke-width="0.75">_App details</text>
<text x="1522.24" y="589.2" font-size="23.55" font-weight="700" fill="#5f5f5f" textLength="251.73" lengthAdjust="spacing" >Total time spent: <tspan fill="#7a2393">4 ms</tspan></text>
<text x="1517.15" y="639.75" font-size="23.98" font-weight="700" fill="#1f1f1f" textLength="102.17" lengthAdjust="spacing" >Directive</text>
<text x="1700.15" y="639.75" font-size="23.98" font-weight="700" fill="#1f1f1f" textLength="87.94" lengthAdjust="spacing" >Method</text>
<text x="1864.73" y="639.75" font-size="23.98" font-weight="700" fill="#1f1f1f" textLength="56.09" lengthAdjust="spacing" >Time</text>
<text x="1518.35" y="687.75" font-size="22.89" font-weight="400" fill="#1f1f1f" textLength="55.36" lengthAdjust="spacing" >_App</text>
<text x="1700.33" y="687.75" font-size="22.89" font-weight="400" fill="#1f1f1f" textLength="91.50" lengthAdjust="spacing" >changes</text>
<text x="1864.47" y="687.75" font-size="22.89" font-weight="400" fill="#1f1f1f" textLength="52.35" lengthAdjust="spacing" >4 ms</text>
<circle cx="25.6" cy="896.8" r="3.3" fill="#474747"/>
<circle cx="25.6" cy="906.2" r="3.3" fill="#474747"/>
<circle cx="25.6" cy="915.9" r="3.3" fill="#474747"/>
<text x="75.45" y="914.6" font-size="24.56" font-weight="400" fill="#3c3c3c" textLength="89.24" lengthAdjust="spacing" >Console</text>
<text x="217.97" y="915" font-size="24.71" font-weight="400" fill="#1f5fcc" textLength="230.24" lengthAdjust="spacing" >Performance monitor</text>
<path d="M467.5 899.5 L481.5 913.5 M481.5 899.5 L467.5 913.5" stroke="#333" stroke-width="2.6"/>
<text x="528.31" y="914.8" font-size="24.27" font-weight="400" fill="#3c3c3c" textLength="112.76" lengthAdjust="spacing" >Rendering</text>
<text x="712.16" y="914.8" font-size="24.27" font-weight="400" fill="#3c3c3c" textLength="70.62" lengthAdjust="spacing" >Issues</text>
<path d="M1966.5 897.5 L1984.5 915.5 M1984.5 897.5 L1966.5 915.5" stroke="#333" stroke-width="3"/>
<rect x="25.9" y="965.2" width="24.7" height="24.6" rx="4" fill="#1b6ef3"/>
<path d="M29.6 977.8000000000001 L35.4 983.4000000000001 L46.3 970.0" fill="none" stroke="#fff" stroke-width="4"/>
<text x="62.78" y="985.5" font-size="24.00" font-weight="400" fill="#1f1f1f" textLength="121.99" lengthAdjust="spacing" >CPU usage</text>
<rect x="25.9" y="1023.8000000000001" width="24.7" height="24.6" rx="4" fill="#1b6ef3"/>
<path d="M29.6 1036.4 L35.4 1042.0 L46.3 1028.6000000000001" fill="none" stroke="#fff" stroke-width="4"/>
<text x="63.62" y="1044.1" font-size="24.00" font-weight="400" fill="#1f1f1f" textLength="138.14" lengthAdjust="spacing" >JS heap size</text>
<rect x="25.9" y="1082.4" width="24.7" height="24.6" rx="4" fill="#1b6ef3"/>
<path d="M29.6 1095.0 L35.4 1100.6000000000001 L46.3 1087.2" fill="none" stroke="#fff" stroke-width="4"/>
<text x="62.03" y="1102.7" font-size="24.00" font-weight="400" fill="#1f1f1f" textLength="133.54" lengthAdjust="spacing" >DOM Nodes</text>
<rect x="27" y="1142.0" width="22.6" height="22.6" rx="3.5" fill="none" stroke="#6d6d6d" stroke-width="2"/>
<text x="63.62" y="1161.3" font-size="24.00" font-weight="400" fill="#1f1f1f" textLength="192.44" lengthAdjust="spacing" >JS event listeners</text>
<rect x="27" y="1200.6000000000001" width="22.6" height="22.6" rx="3.5" fill="none" stroke="#6d6d6d" stroke-width="2"/>
<text x="62.03" y="1219.9" font-size="24.00" font-weight="400" fill="#1f1f1f" textLength="124.74" lengthAdjust="spacing" >Documents</text>
<rect x="27" y="1259.2" width="22.6" height="22.6" rx="3.5" fill="none" stroke="#6d6d6d" stroke-width="2"/>
<text x="62.03" y="1278.5" font-size="24.00" font-weight="400" fill="#1f1f1f" textLength="199.54" lengthAdjust="spacing" >Document Frames</text>
<rect x="27" y="1317.8000000000002" width="22.6" height="22.6" rx="3.5" fill="none" stroke="#6d6d6d" stroke-width="2"/>
<text x="62.03" y="1337.1" font-size="24.00" font-weight="400" fill="#1f1f1f" textLength="145.40" lengthAdjust="spacing" >Layouts / sec</text>
<rect x="27" y="1376.4" width="22.6" height="22.6" rx="3.5" fill="none" stroke="#6d6d6d" stroke-width="2"/>
<text x="62.91" y="1395.7" font-size="24.00" font-weight="400" fill="#1f1f1f" textLength="200.02" lengthAdjust="spacing" >Style recalcs / sec</text>
<text x="358.05" y="980.3" font-size="24.30" font-weight="400" fill="#e4b329" textLength="55.12" lengthAdjust="spacing" >0.6%</text>
<text x="327.95" y="1038.7" font-size="24.30" font-weight="400" fill="#c58af9" textLength="86.63" lengthAdjust="spacing" >16.0 MB</text>
<text x="357.15" y="1097.7" font-size="24.30" font-weight="400" fill="#1e6b3a" textLength="56.87" lengthAdjust="spacing" >1,675</text>
</svg>
</body></html>
